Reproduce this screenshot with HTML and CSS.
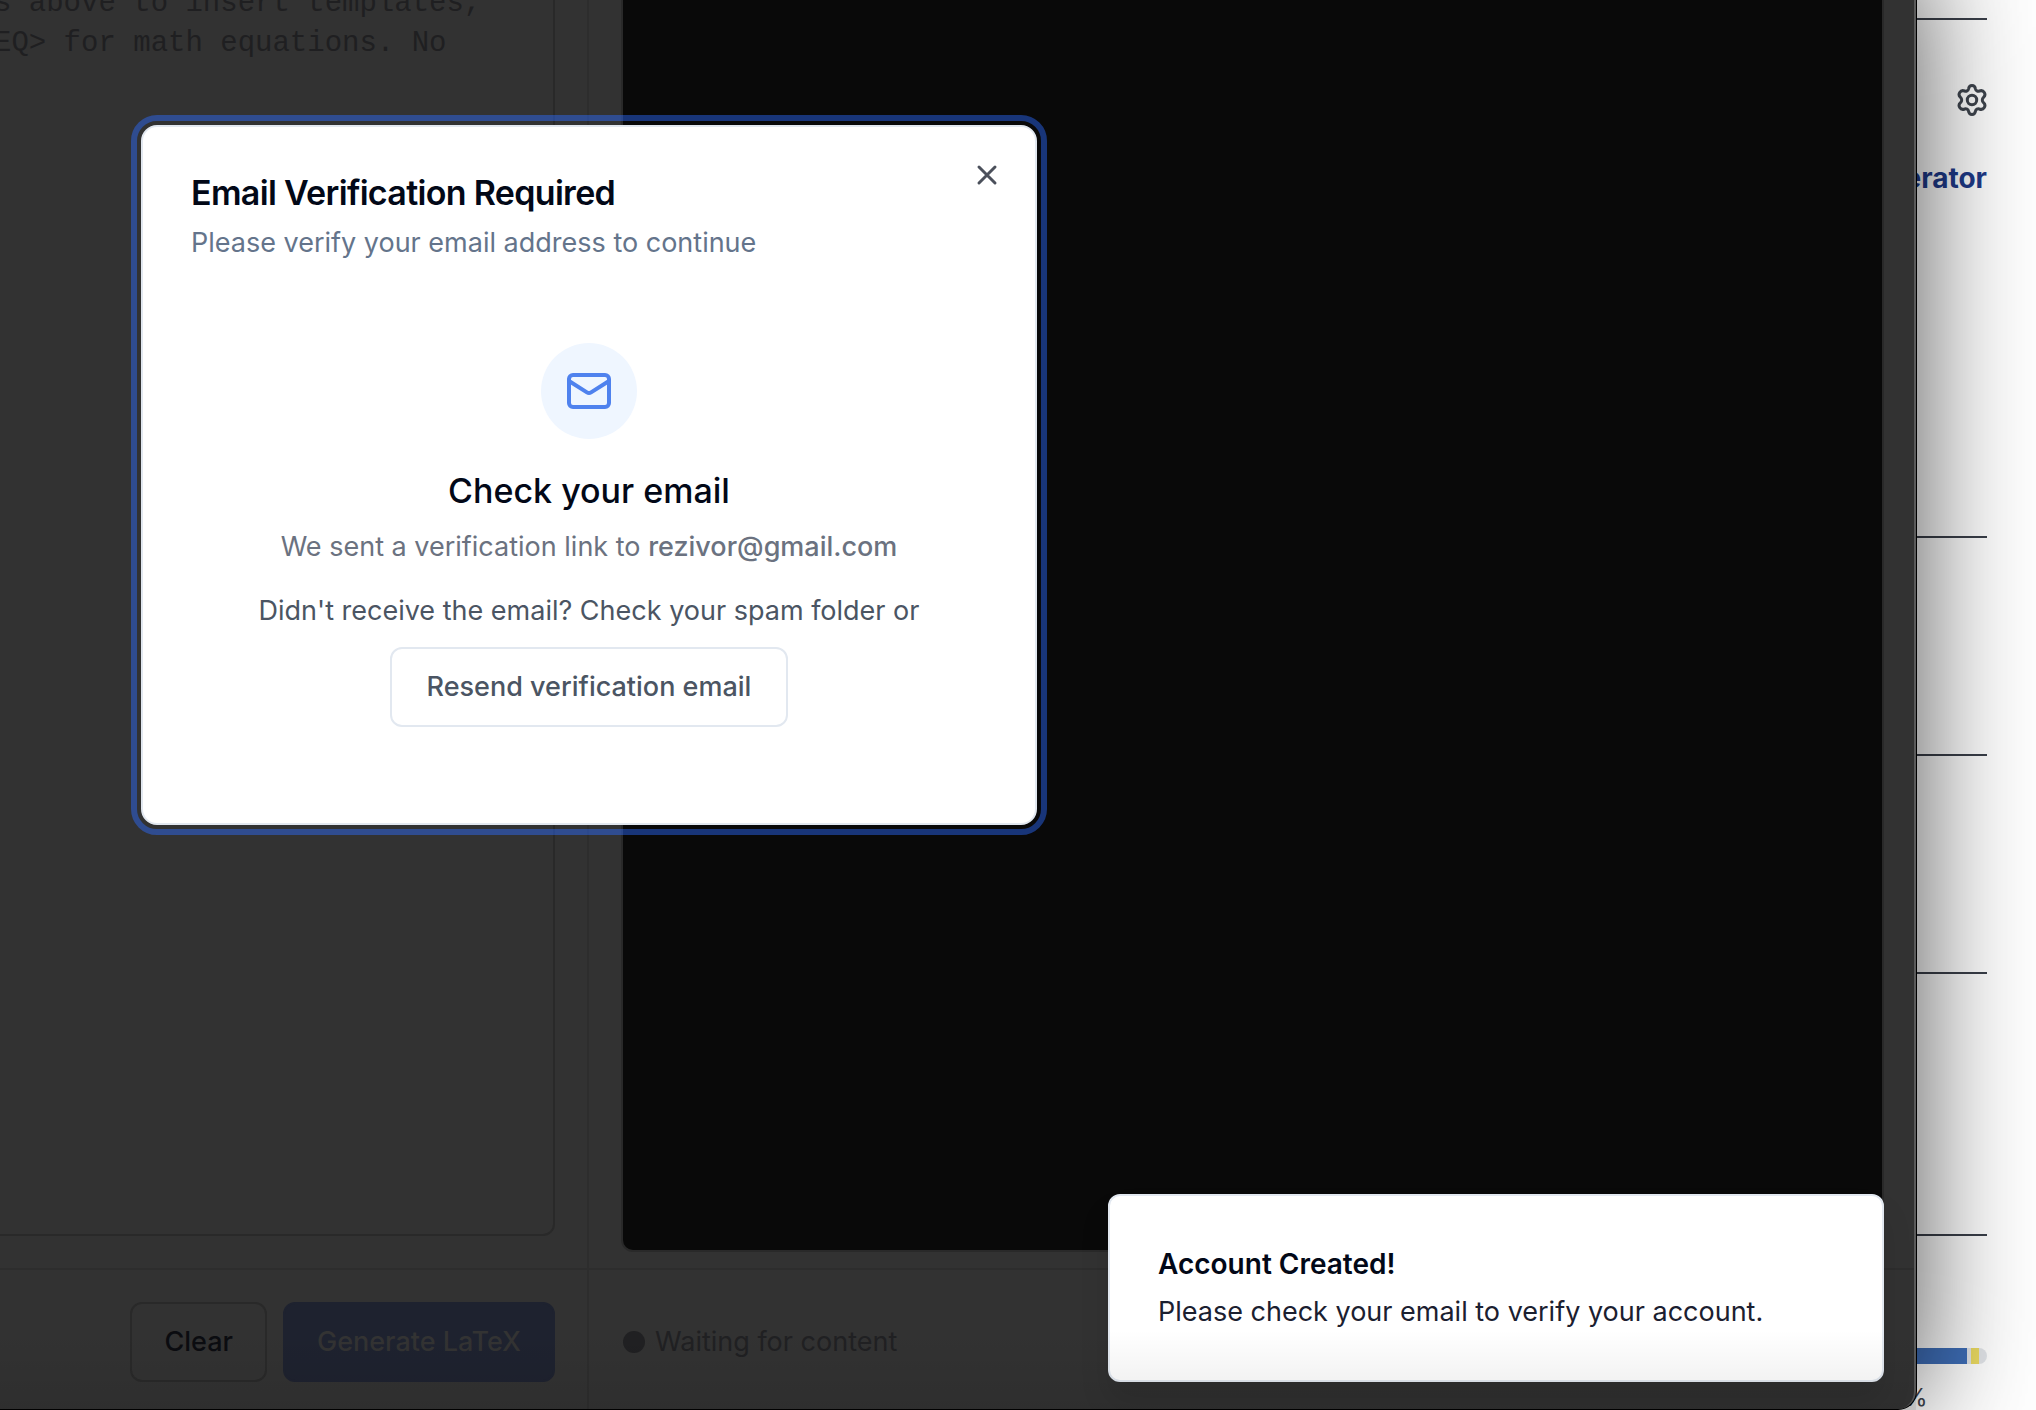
FILE: index.html
```html
<!DOCTYPE html>
<html lang="en">
<head>
<meta charset="utf-8">
<title>LaTeX Generator</title>
<link rel="stylesheet" href="styles.css">
</head>
<body>
<div class="desktop">
  <main class="window">
    <section class="pane editor">
      <div class="pane-body">
        <textarea class="source" aria-label="Source text" placeholder="s above to insert templates,&#10;EQ&gt; for math equations. No"></textarea>
      </div>
      <footer class="pane-footer actions">
        <button class="btn btn-outline" type="button">Clear</button>
        <button class="btn btn-primary" type="button" disabled>Generate LaTeX</button>
      </footer>
    </section>
    <section class="pane preview">
      <div class="pane-body"><div class="output"></div></div>
      <footer class="pane-footer status"><span class="dot"></span>Waiting for content</footer>
    </section>
  </main>

  <aside class="side">
    <div class="side-row row-top"></div>
    <div class="side-row row-head">
      <svg class="gear" viewBox="0 0 30 32" fill="none" stroke="currentColor" stroke-width="3" stroke-linejoin="round" aria-label="Settings"><path d="M15 1.500C17.500 1.500 18.200 3 18.500 5C18.800 6.600 20.800 7.600 22.300 7C24.500 6.200 26.100 6.500 27.300 8.500C28.500 10.500 28 12 26.500 13.300C24.900 14.700 24.900 17.300 26.500 18.700C28 20 28.500 21.500 27.300 23.500C26.100 25.500 24.500 25.800 22.300 25C20.800 24.400 18.800 25.400 18.500 27C18.200 29 17.500 30.500 15 30.500C12.500 30.500 11.800 29 11.500 27C11.200 25.400 9.200 24.400 7.700 25C5.500 25.800 3.900 25.500 2.700 23.500C1.500 21.500 2 20 3.500 18.700C5.100 17.300 5.100 14.700 3.500 13.300C2 12 1.500 10.500 2.700 8.500C3.900 6.500 5.500 6.200 7.700 7C9.200 7.600 11.200 6.600 11.500 5C11.800 3 12.500 1.500 15 1.500Z"/><circle cx="15" cy="16" r="4.700"/></svg>
      <a class="side-link" href="#">Generator</a>
    </div>
    <div class="side-row row-item"></div>
    <div class="side-row row-item"></div>
    <div class="side-row row-last"></div>
    <div class="usage">
      <div class="bar"><span class="bar-blue"></span><span class="bar-yellow"></span></div>
      <span class="percent">%</span>
    </div>
  </aside>
</div>

<div class="dialog" role="dialog" aria-labelledby="dialog-title">
  <button class="close" type="button" aria-label="Close"><svg viewBox="0 0 32 32" fill="none" stroke="currentColor" stroke-width="3" stroke-linecap="round"><path d="M8 8L24 24M24 8L8 24"/></svg></button>
  <h2 class="dialog-title" id="dialog-title">Email Verification Required</h2>
  <p class="dialog-sub">Please verify your email address to continue</p>
  <div class="check">
    <span class="badge"><svg viewBox="0 0 24 24" fill="none" stroke="currentColor" stroke-width="2" stroke-linecap="round" stroke-linejoin="round"><rect x="2" y="4" width="20" height="16" rx="2"/><path d="M22 7l-8.970 5.700a1.940 1.940 0 0 1-2.060 0L2 7"/></svg></span>
    <h3 class="check-title">Check your email</h3>
    <p class="sent">We sent a verification link to <strong>rezivor@gmail.com</strong></p>
    <p class="hint">Didn't receive the email? Check your spam folder or</p>
    <button class="btn btn-resend" type="button">Resend verification email</button>
  </div>
</div>

<div class="toast" role="status">
  <strong class="toast-title">Account Created!</strong>
  <p class="toast-text">Please check your email to verify your account.</p>
</div>
<div class="edge-shade"></div>
</body>
</html>
```
FILE: styles.css
```css
* { box-sizing: border-box; }

body {
  margin: 0;
  height: 100vh;
  overflow: hidden;
  position: relative;
  background: #fff;
  font-family: Inter, "Liberation Sans", sans-serif;
  font-size: 27px;
  line-height: 40px;
  color: #020817;
}

h2, h3, p { margin: 0; }
button { font: inherit; cursor: pointer; }
svg { display: block; }

.desktop { display: flex; height: 100%; }

/* Dimmed application window */
.window {
  flex: 1;
  display: flex;
  position: relative;
  z-index: 1;
  margin: -40px 0 1px -32px;
  background: #323232;
  border-right: 2px solid #5a5a5a;
  border-radius: 0 0 18px 0;
  box-shadow: 0 0 0 1px #000, 0 0 120px rgba(0, 0, 0, 0.7);
}

.pane { display: flex; flex-direction: column; }
.editor { width: 621px; border-right: 2px solid #2d2d2d; }
.preview { flex: 1; }
.pane-body { flex: 1; display: flex; padding-right: 32px; padding-bottom: 32px; }
.editor .pane-body { padding-left: 10px; }
.preview .pane-body { padding: 0 30px 16px 32px; }

.source {
  flex: 1;
  resize: none;
  background: transparent;
  border: 2px solid #292929;
  border-radius: 12px;
  padding: 22px 14px;
  font: 29px/40px "Liberation Mono", monospace;
  white-space: pre;
  overflow: hidden;
}
.source::placeholder { color: #1f1f21; opacity: 1; }

.output {
  flex: 1;
  background: #090909;
  border: 2px solid #292929;
  border-radius: 12px;
}

.pane-footer {
  height: 141px;
  border-top: 2px solid #2d2d2d;
  padding: 32px 32px 27px;
  display: flex;
  align-items: center;
}
.actions { justify-content: flex-end; gap: 16px; }
.status { padding-left: 34px; gap: 10px; color: #202022; }
.dot { width: 22px; height: 22px; border-radius: 50%; background: #202022; }

.btn {
  height: 80px;
  padding: 0 32px;
  border: 2px solid;
  border-radius: 12px;
  font-weight: 500;
  white-space: nowrap;
}
.btn-outline { background: transparent; border-color: #292929; color: #0b0c10; }
.btn-primary { background: #1e222f; border-color: #1e222f; color: #333; }

/* Page behind the window */
.side {
  width: 120px;
  padding-right: 49px;
  display: flex;
  flex-direction: column;
  color: #3f454e;
}
.side-row { flex-shrink: 0; border-bottom: 2px solid #3a3f49; }
.row-top { height: 20px; }
.row-head {
  height: 518px;
  padding-top: 64px;
  display: flex;
  flex-direction: column;
  align-items: flex-end;
  gap: 42px;
}
.row-item { height: 218px; }
.row-last { height: 262px; }
.gear { width: 30px; height: 32px; }
.side-link { color: #1e3a8a; font-size: 28px; font-weight: 700; text-decoration: none; }
.usage { padding-top: 112px; }
.bar {
  height: 16px;
  display: flex;
  gap: 4px;
  background: #e2e5e9;
  border-radius: 0 8px 8px 0;
}
.bar-blue { width: 51px; background: #3f6fb9; }
.bar-yellow { width: 8px; background: #ecdb62; }
.percent { display: block; margin-left: -12px; padding-top: 14px; font-size: 24px; line-height: 40px; }

/* Verification dialog */
.dialog {
  position: absolute;
  z-index: 2;
  left: 141px;
  top: 125px;
  width: 896px;
  min-height: 700px;
  padding: 48px;
  background: #fff;
  border: 2px solid #e2e8f0;
  border-radius: 16px;
  outline: 6px solid rgba(44, 106, 255, 0.46);
  outline-offset: 4px;
}
.dialog-title { font-size: 34px; line-height: 36px; font-weight: 600; letter-spacing: -0.02em; }
.dialog-sub { margin-top: 12px; color: #64748b; }
.close {
  position: absolute;
  top: 32px;
  right: 32px;
  width: 32px;
  height: 32px;
  padding: 0;
  border: 0;
  background: none;
  color: #4b505b;
}
.check { display: flex; flex-direction: column; align-items: center; padding-top: 80px; }
.badge {
  width: 96px;
  height: 96px;
  border-radius: 50%;
  background: #eff6ff;
  color: #4f82ee;
  display: flex;
  align-items: center;
  justify-content: center;
}
.badge svg { width: 48px; height: 48px; }
.check-title { margin-top: 24px; font-size: 34px; line-height: 56px; font-weight: 500; }
.sent { margin-top: 8px; color: #6b7280; }
.sent strong { font-weight: 500; }
.hint { margin-top: 24px; color: #4b5563; }
.btn-resend { margin-top: 16px; padding: 0 35px; background: #fff; border-color: #e2e8f0; color: #4b5563; }

/* Toast */
.toast {
  position: absolute;
  z-index: 2;
  right: 152px;
  bottom: 28px;
  width: 776px;
  min-height: 188px;
  padding: 48px;
  background: #fff;
  border: 2px solid #e2e8f0;
  border-radius: 12px;
  box-shadow: 0 20px 30px rgba(0, 0, 0, 0.1);
}
.toast-title { display: block; font-size: 28px; font-weight: 600; }
.toast-text { margin-top: 8px; color: #1b2030; }

.edge-shade {
  position: absolute;
  z-index: 3;
  inset: auto 120px 0 0;
  height: 80px;
  background: linear-gradient(rgba(0, 0, 0, 0), rgba(0, 0, 0, 0.08));
  pointer-events: none;
}
```
